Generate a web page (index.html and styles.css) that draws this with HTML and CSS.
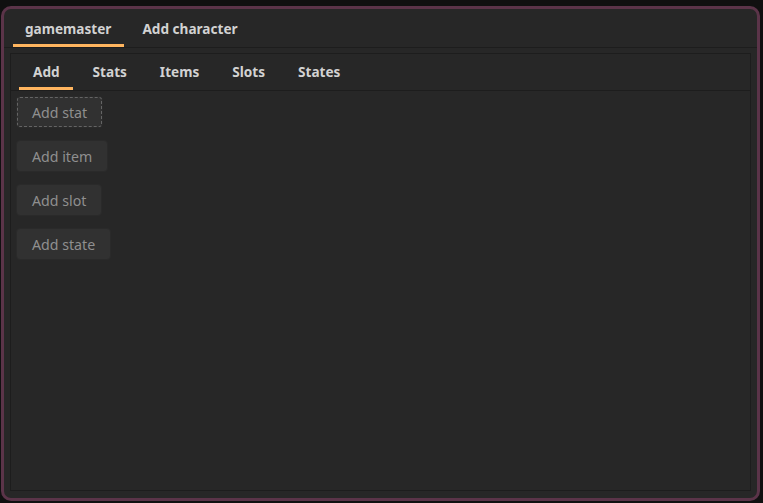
FILE: index.html
```html
<!DOCTYPE html>
<html>
<head>
<meta charset="utf-8">
<link rel="stylesheet" href="styles.css">
</head>
<body>
<div class="window">
  <div class="tabbar top">
    <div class="tab active">gamemaster</div>
    <div class="tab">Add character</div>
  </div>
  <div class="frame">
    <div class="tabbar inner">
      <div class="tab active">Add</div>
      <div class="tab">Stats</div>
      <div class="tab">Items</div>
      <div class="tab">Slots</div>
      <div class="tab">States</div>
    </div>
    <div class="content">
      <button class="btn focus">Add stat</button>
      <button class="btn">Add item</button>
      <button class="btn">Add slot</button>
      <button class="btn">Add state</button>
    </div>
  </div>
</div>
</body>
</html>
```
FILE: styles.css
```css
html, body {
  margin: 0;
  padding: 0;
  background: #101010;
  width: 763px;
  height: 503px;
  overflow: hidden;
  font-family: "Noto Sans", "DejaVu Sans", sans-serif;
}
.window {
  box-sizing: border-box;
  margin: 6px 0 0 1px;
  width: 759px;
  height: 495px;
  border: 3px solid #5b3449;
  border-radius: 10px;
  background: #272727;
  display: flex;
  flex-direction: column;
}
.tabbar {
  display: flex;
  align-items: stretch;
  border-bottom: 1px solid #1d1d1d;
  box-sizing: content-box;
}
.tabbar.top {
  height: 38px;
  padding-left: 6px;
}
.tab {
  margin: 0 3px;
  padding: 4px 13px 0 12px;
  display: flex;
  align-items: center;
  font-size: 13.6px;
  font-weight: bold;
  color: #d2d2d2;
  border-bottom: 3px solid transparent;
  box-sizing: border-box;
}
.tab.active {
  border-bottom-color: #ffb55f;
}
.frame {
  flex: 1;
  margin: 5px 6px 7px 6px;
  border: 1px solid #1d1d1d;
  display: flex;
  flex-direction: column;
}
.tabbar.inner {
  height: 36px;
  padding-left: 5px;
}
.tabbar.inner .tab {
  padding: 2px 13px 0 14px;
}
.content {
  display: flex;
  flex-direction: column;
  align-items: flex-start;
  gap: 12px;
  padding: 5px 5px;
}
.btn {
  height: 32px;
  box-sizing: border-box;
  padding: 0 15px;
  background: #313131;
  border: 1px solid #2a2a2a;
  border-radius: 4px;
  color: #8f8f8f;
  font-family: "Noto Sans", "DejaVu Sans", sans-serif;
  font-size: 14.2px;
}
.btn.focus {
  outline: 1px dashed #646464;
  outline-offset: -2px;
}
```
